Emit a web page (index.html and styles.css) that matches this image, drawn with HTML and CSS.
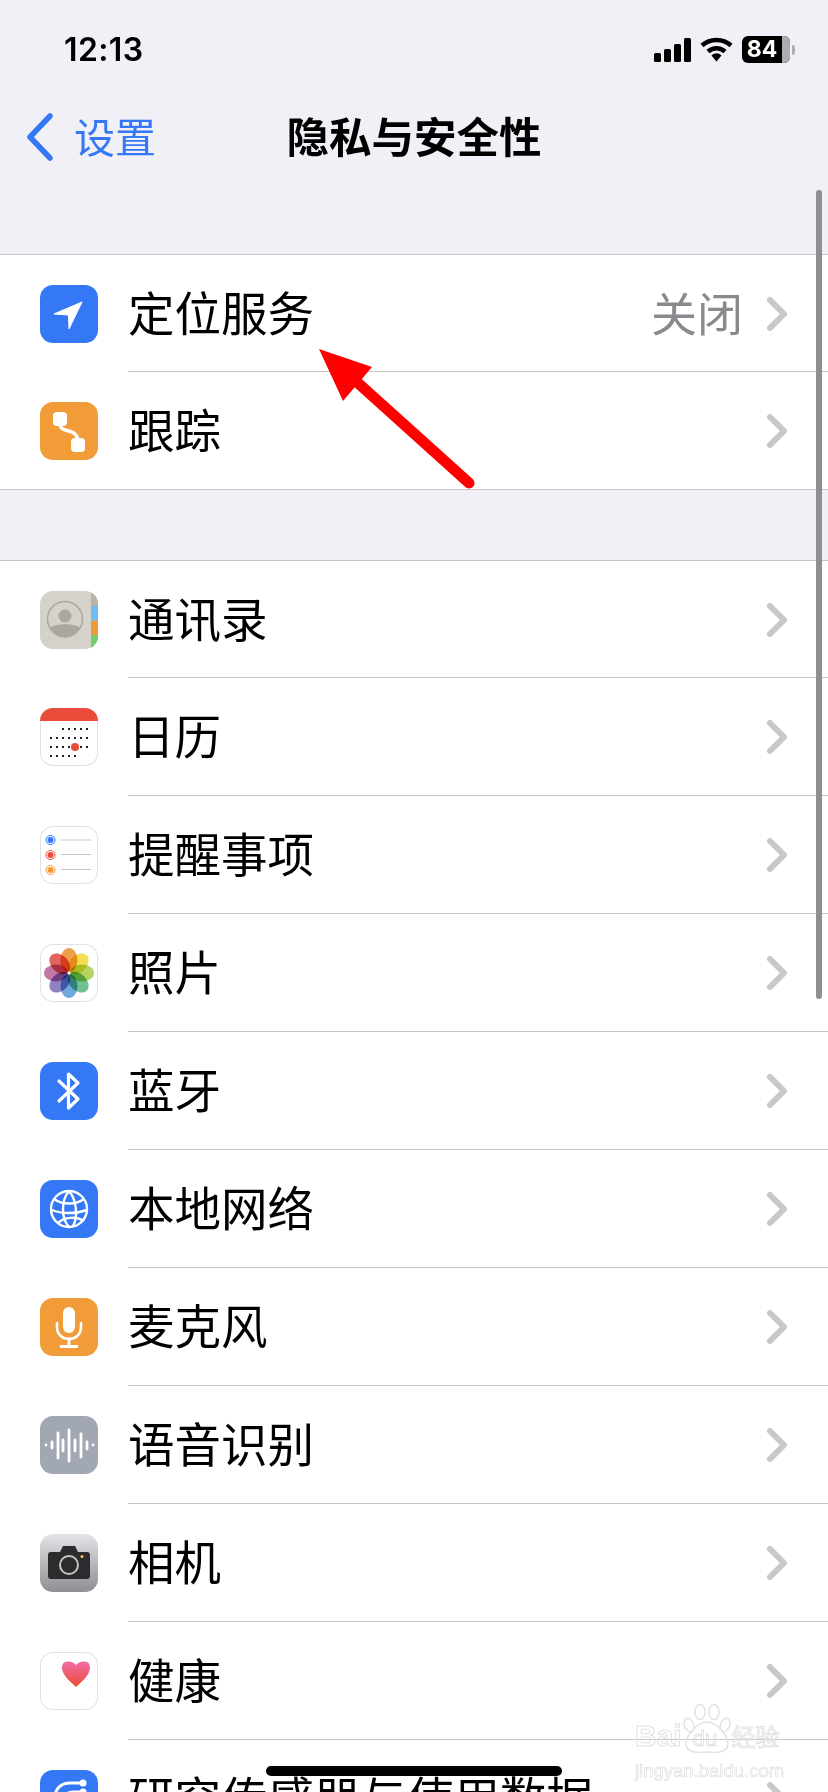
FILE: index.html
```html
<!DOCTYPE html>
<html lang="zh-CN">
<head>
    <meta charset="UTF-8">
    <meta name="viewport" content="width=device-width, initial-scale=1.0">
    <title>隐私与安全性</title>
    <link rel="stylesheet" href="styles.css">
</head>
<body>
<div class="screen">

    <div class="status-bar">
        <span class="time">12:13</span>
        <div class="status-icons">
            <svg class="signal" width="37" height="24" viewBox="0 0 37 24"><rect x="0" y="15" width="7" height="9" rx="1.5"/><rect x="10" y="11" width="7" height="13" rx="1.5"/><rect x="20" y="6" width="7" height="18" rx="1.5"/><rect x="30" y="0" width="7" height="24" rx="1.5"/></svg>
            <svg class="wifi" width="33" height="25" viewBox="0 0 33 25"><path d="M2 8.5 C10 1 23 1 31 8.500" fill="none" stroke="#000" stroke-width="4.500"/><path d="M8 14.500 C13 10 20 10 25 14.500" fill="none" stroke="#000" stroke-width="4.500"/><path d="M11.500 18.500 C14.500 15.500 18.500 15.500 21.500 18.500 L16.500 24.500 Z"/></svg>
            <div class="battery"><span class="battery-level">84</span><span class="battery-rest"></span></div>
            <span class="battery-cap"></span>
        </div>
    </div>

    <div class="nav-bar">
        <div class="back">
            <svg width="28" height="48" viewBox="0 0 28 48"><path d="M24 3 L4 24 L24 45" fill="none" stroke="#3478f6" stroke-width="5.500" stroke-linecap="round" stroke-linejoin="round"/></svg>
            <span class="back-label">设置</span>
        </div>
        <span class="nav-title">隐私与安全性</span>
    </div>

    <div class="group first">
        <div class="row">
            <div class="icon blue">
                <svg width="58" height="58" viewBox="0 0 58 58"><path d="M14 29 L42 17 L29 44 L28.500 30 Z" fill="#fff" stroke="#fff" stroke-width="1" stroke-linejoin="round"/></svg>
            </div>
            <div class="row-body"><span class="label">定位服务</span><span class="value">关闭</span><svg class="chev" width="20" height="34" viewBox="0 0 20 34"><path d="M3 3 L17 17 L3 31" /></svg></div>
        </div>
        <div class="row">
            <div class="icon orange">
                <svg width="58" height="58" viewBox="0 0 58 58"><path d="M20 22 C20 32 36 25 38 38" fill="none" stroke="#fff" stroke-width="3.500"/><rect x="13" y="10" width="14" height="14" rx="4" fill="#fff"/><rect x="31" y="36" width="14" height="14" rx="4" fill="#fff"/></svg>
            </div>
            <div class="row-body"><span class="label">跟踪</span><svg class="chev" width="20" height="34" viewBox="0 0 20 34"><path d="M3 3 L17 17 L3 31" /></svg></div>
        </div>
    </div>

    <div class="group">
        <div class="row">
            <div class="icon contacts">
                <svg width="58" height="58" viewBox="0 0 58 58"><rect x="51" y="0" width="7" height="58" fill="#b5b3aa"/><rect x="51" y="15" width="7" height="14" fill="#6fbdf2"/><rect x="51" y="30" width="7" height="14" fill="#f09a37"/><rect x="51" y="44" width="7" height="14" fill="#6fd06a"/><circle cx="25" cy="28" r="17.500" fill="none" stroke="#aba6a0" stroke-width="1.500"/><circle cx="25" cy="25" r="6.500" fill="#aba6a0"/><path d="M10 37 C14 32 36 32 40 37 A16.500 16.500 0 0 1 10 37 Z" fill="#aba6a0"/></svg>
            </div>
            <div class="row-body"><span class="label">通讯录</span><svg class="chev" width="20" height="34" viewBox="0 0 20 34"><path d="M3 3 L17 17 L3 31" /></svg></div>
        </div>
        <div class="row">
            <div class="icon outlined">
                <svg width="58" height="58" viewBox="0 0 58 58"><rect x="0" y="0" width="58" height="13" fill="#ea4c3c"/>
                    <g fill="#222"><rect x="22" y="20" width="2" height="2"/><rect x="28" y="20" width="2" height="2"/><rect x="34" y="20" width="2" height="2"/><rect x="40" y="20" width="2" height="2"/><rect x="46" y="20" width="2" height="2"/>
                    <rect x="10" y="29" width="2" height="2"/><rect x="16" y="29" width="2" height="2"/><rect x="22" y="29" width="2" height="2"/><rect x="28" y="29" width="2" height="2"/><rect x="34" y="29" width="2" height="2"/><rect x="40" y="29" width="2" height="2"/><rect x="46" y="29" width="2" height="2"/>
                    <rect x="10" y="38" width="2" height="2"/><rect x="16" y="38" width="2" height="2"/><rect x="22" y="38" width="2" height="2"/><rect x="28" y="38" width="2" height="2"/><rect x="40" y="38" width="2" height="2"/><rect x="46" y="38" width="2" height="2"/>
                    <rect x="10" y="47" width="2" height="2"/><rect x="16" y="47" width="2" height="2"/><rect x="22" y="47" width="2" height="2"/><rect x="28" y="47" width="2" height="2"/><rect x="34" y="47" width="2" height="2"/></g>
                    <circle cx="35" cy="39" r="4" fill="#ea4c3c"/></svg>
            </div>
            <div class="row-body"><span class="label">日历</span><svg class="chev" width="20" height="34" viewBox="0 0 20 34"><path d="M3 3 L17 17 L3 31" /></svg></div>
        </div>
        <div class="row">
            <div class="icon outlined">
                <svg width="58" height="58" viewBox="0 0 58 58"><circle cx="10.500" cy="14" r="4.500" fill="none" stroke="#3478f6"/><circle cx="10.500" cy="14" r="3" fill="#3478f6"/><circle cx="10.500" cy="29" r="4.500" fill="none" stroke="#ea4c3c"/><circle cx="10.500" cy="29" r="3" fill="#ea4c3c"/><circle cx="10.500" cy="44" r="4.500" fill="none" stroke="#f09a37"/><circle cx="10.500" cy="44" r="3" fill="#f09a37"/><path d="M21 14 H51 M21 28.500 H51 M21 43.500 H51" stroke="#c6c6c8" stroke-width="1"/></svg>
            </div>
            <div class="row-body"><span class="label">提醒事项</span><svg class="chev" width="20" height="34" viewBox="0 0 20 34"><path d="M3 3 L17 17 L3 31" /></svg></div>
        </div>
        <div class="row">
            <div class="icon outlined">
                <svg width="58" height="58" viewBox="0 0 58 58"><g class="flower">
                    <ellipse cx="29" cy="16" rx="8.500" ry="12" fill="#ef9f48"/>
                    <ellipse cx="29" cy="16" rx="8.500" ry="12" fill="#f2e050" transform="rotate(45 29 29)"/>
                    <ellipse cx="29" cy="16" rx="8.500" ry="12" fill="#b5d561" transform="rotate(90 29 29)"/>
                    <ellipse cx="29" cy="16" rx="8.500" ry="12" fill="#72bf8f" transform="rotate(135 29 29)"/>
                    <ellipse cx="29" cy="16" rx="8.500" ry="12" fill="#6fa8dd" transform="rotate(180 29 29)"/>
                    <ellipse cx="29" cy="16" rx="8.500" ry="12" fill="#8f83c2" transform="rotate(225 29 29)"/>
                    <ellipse cx="29" cy="16" rx="8.500" ry="12" fill="#c279a8" transform="rotate(270 29 29)"/>
                    <ellipse cx="29" cy="16" rx="8.500" ry="12" fill="#e2625e" transform="rotate(315 29 29)"/>
                    </g><circle cx="29" cy="29" r="1.500" fill="#fff"/></svg>
            </div>
            <div class="row-body"><span class="label">照片</span><svg class="chev" width="20" height="34" viewBox="0 0 20 34"><path d="M3 3 L17 17 L3 31" /></svg></div>
        </div>
        <div class="row">
            <div class="icon blue">
                <svg width="58" height="58" viewBox="0 0 58 58"><path d="M19 19 L38 37 L28.500 46 V12 L38 21 L19 39" fill="none" stroke="#fff" stroke-width="3.200" stroke-linecap="round" stroke-linejoin="round"/></svg>
            </div>
            <div class="row-body"><span class="label">蓝牙</span><svg class="chev" width="20" height="34" viewBox="0 0 20 34"><path d="M3 3 L17 17 L3 31" /></svg></div>
        </div>
        <div class="row">
            <div class="icon blue">
                <svg width="58" height="58" viewBox="0 0 58 58"><g fill="none" stroke="#fff" stroke-width="2.400"><circle cx="29" cy="29" r="18"/><path d="M29 11 C21 20 21 38 29 47 M29 11 C37 20 38 38 33 46"/><path d="M14 19 C22 25 36 25 44 19 M11.500 30 C22 34 36 34 47 30 M18 43 C24 37 36 36 44 41"/></g></svg>
            </div>
            <div class="row-body"><span class="label">本地网络</span><svg class="chev" width="20" height="34" viewBox="0 0 20 34"><path d="M3 3 L17 17 L3 31" /></svg></div>
        </div>
        <div class="row">
            <div class="icon orange">
                <svg width="58" height="58" viewBox="0 0 58 58"><rect x="23" y="9" width="12" height="26" rx="6" fill="#fff"/><path d="M17 25 V29 C17 45 41 45 41 29 V25" fill="none" stroke="#fff" stroke-width="2.600" stroke-linecap="round"/><path d="M29 41 V48 M21 48.500 H37" stroke="#fff" stroke-width="2.800" stroke-linecap="round"/></svg>
            </div>
            <div class="row-body"><span class="label">麦克风</span><svg class="chev" width="20" height="34" viewBox="0 0 20 34"><path d="M3 3 L17 17 L3 31" /></svg></div>
        </div>
        <div class="row">
            <div class="icon gray">
                <svg width="58" height="58" viewBox="0 0 58 58"><path d="M6 29 V29.100 M12 26 V32 M18 17 V42 M23 24 V35 M29 14 V45 M35 24 V35 M41 18 V41 M47 26 V33 M53 29 V29.100" stroke="#fff" stroke-width="2.800" stroke-linecap="round"/></svg>
            </div>
            <div class="row-body"><span class="label">语音识别</span><svg class="chev" width="20" height="34" viewBox="0 0 20 34"><path d="M3 3 L17 17 L3 31" /></svg></div>
        </div>
        <div class="row">
            <div class="icon camera">
                <svg width="58" height="58" viewBox="0 0 58 58"><path d="M11 18 H20 L23 12 H35 L38 18 H47 A3 3 0 0 1 50 21 V42 A3 3 0 0 1 47 45 H11 A3 3 0 0 1 8 42 V21 A3 3 0 0 1 11 18 Z" fill="#2c2c2e"/><circle cx="29" cy="31" r="9" fill="none" stroke="#c4c4c6" stroke-width="2"/><circle cx="42" cy="22.500" r="1.500" fill="#f5c542"/></svg>
            </div>
            <div class="row-body"><span class="label">相机</span><svg class="chev" width="20" height="34" viewBox="0 0 20 34"><path d="M3 3 L17 17 L3 31" /></svg></div>
        </div>
        <div class="row">
            <div class="icon outlined">
                <svg width="58" height="58" viewBox="0 0 58 58"><defs><linearGradient id="heart" x1="0" y1="0" x2="0" y2="1"><stop offset="0" stop-color="#f26ea8"/><stop offset="1" stop-color="#ee4a34"/></linearGradient></defs><path d="M36 35 C27 27 22 21.500 22 15.500 C22 11 25 9.500 28 9.500 C31 9.500 35 11 36 13.500 C37 11 41 9.500 44 9.500 C47 9.500 50 11 50 15.500 C50 21.500 45 27 36 35 Z" fill="url(#heart)"/></svg>
            </div>
            <div class="row-body"><span class="label">健康</span><svg class="chev" width="20" height="34" viewBox="0 0 20 34"><path d="M3 3 L17 17 L3 31" /></svg></div>
        </div>
        <div class="row">
            <div class="icon blue">
                <svg width="58" height="58" viewBox="0 0 58 58"><path d="M15 35 V27 C15 18 22 13 30 13 H42" fill="none" stroke="#fff" stroke-width="3"/><path d="M24 30 C24 24 28 22 34 22 H42" fill="none" stroke="#fff" stroke-width="3"/><circle cx="43" cy="13" r="3.500" fill="#fff"/><circle cx="43" cy="22" r="3.500" fill="#fff"/></svg>
            </div>
            <div class="row-body"><span class="label">研究传感器与使用数据</span><svg class="chev" width="20" height="34" viewBox="0 0 20 34"><path d="M3 3 L17 17 L3 31" /></svg></div>
        </div>
    </div>

    <div class="scrollbar"></div>

    <!-- red annotation arrow on top of the screenshot -->
    <svg class="arrow" width="170" height="150" viewBox="0 0 170 150"><path d="M43 38 L154 138" stroke="#ff0000" stroke-width="11" stroke-linecap="round"/><path d="M4 4 L57 22 L28 56 Z" fill="#ff0000"/></svg>

    <div class="watermark">
        <svg class="paw" width="48" height="52" viewBox="0 0 48 52"><g fill="none" stroke="#e2e2e2" stroke-width="1.500"><ellipse cx="6" cy="22" rx="4.500" ry="7" transform="rotate(-20 6 22)"/><ellipse cx="17" cy="9" rx="5" ry="7.500"/><ellipse cx="31" cy="9" rx="5" ry="7.500"/><ellipse cx="42" cy="22" rx="4.500" ry="7" transform="rotate(20 42 22)"/><path d="M3 41 C3 32 15 19 24 19 C33 19 45 32 45 41 C45 50 33 50 24 49 C15 50 3 50 3 41 Z"/></g></svg>
        <div class="wm-brand"><span class="wm-bai">Bai</span><span class="wm-du">du</span><span class="wm-cn">经验</span></div>
        <div class="wm-url">jingyan.baidu.com</div>
    </div>

    <div class="home-indicator"></div>
</div>
</body>
</html>
```
FILE: styles.css
```css
* {
    box-sizing: border-box;
}

html, body {
    margin: 0;
    padding: 0;
}

.screen {
    position: relative;
    width: 828px;
    height: 1792px;
    overflow: hidden;
    background-color: #f1f0f6;
    font-family: "Noto Sans CJK SC", "Noto Sans", sans-serif;
    color: #000;
}

/* status bar */
.status-bar {
    height: 96px;
    padding: 29px 0 0 64px;
    display: flex;
    justify-content: space-between;
    align-items: flex-start;
}

.time {
    font-family: Inter, "Liberation Sans", sans-serif;
    font-size: 32px;
    font-weight: 600;
    line-height: 42px;
    letter-spacing: 0.4px;
}

.status-icons {
    display: flex;
    align-items: center;
    margin-top: 7px;
    margin-right: 33px;
}

.signal {
    margin-right: 9px;
}

.wifi {
    margin-right: 9px;
}

.battery {
    display: flex;
    width: 48px;
    height: 27px;
    border-radius: 6px;
    overflow: hidden;
    background-color: #000;
}

.battery-level {
    width: 40px;
    color: #fff;
    font-family: Inter, "Liberation Sans", sans-serif;
    font-size: 23px;
    font-weight: 700;
    line-height: 27px;
    text-align: center;
}

.battery-rest {
    flex: 1;
    background-color: #adadad;
}

.battery-cap {
    width: 3px;
    height: 10px;
    margin-left: 2px;
    border-radius: 0 3px 3px 0;
    background-color: #adadad;
}

/* nav bar */
.nav-bar {
    position: relative;
    height: 82px;
    display: flex;
    align-items: center;
    justify-content: center;
}

.back {
    position: absolute;
    left: 26px;
    top: 17px;
    display: flex;
    align-items: center;
    gap: 20px;
}

.back-label {
    color: #3478f6;
    font-size: 41px;
    line-height: 48px;
    margin-top: -4px;
}

.nav-title {
    font-size: 42.500px;
    font-weight: 700;
    line-height: 50px;
    margin-top: -5px;
}

/* settings groups */
.group {
    margin-top: 70px;
    background-color: #fff;
    border-top: 1px solid #c6c6c8;
    border-bottom: 1px solid #c6c6c8;
}

.group.first {
    margin-top: 76px;
}

.row {
    height: 118px;
    display: flex;
    align-items: center;
    padding-left: 40px;
}

.row:first-child,
.row:last-child {
    height: 117px;
}

.row-body {
    flex: 1;
    height: 100%;
    margin-left: 30px;
    padding-right: 41px;
    display: flex;
    align-items: center;
    border-bottom: 1px solid #c6c6c8;
}

.row:last-child .row-body {
    border-bottom: none;
}

.label {
    flex: 1;
    font-size: 46.500px;
    line-height: 60px;
    margin-top: -5px;
}

.value {
    color: #8a8a8e;
    font-size: 46px;
    line-height: 60px;
    margin-top: -5px;
    margin-right: 24px;
}

.chev {
    margin-top: 1px;
    fill: none;
    stroke: #c7c7cc;
    stroke-width: 6;
    stroke-linecap: round;
    stroke-linejoin: round;
}

.icon {
    flex: none;
    width: 58px;
    height: 58px;
    border-radius: 13px;
    overflow: hidden;
    position: relative;
}

.icon svg {
    display: block;
}

.icon.blue {
    background-color: #3478f6;
}

.icon.orange {
    background-color: #f19c38;
}

.icon.gray {
    background-color: #a2a8b3;
}

.icon.contacts {
    background-color: #d4d2ca;
}

.icon.camera {
    background: linear-gradient(#e3e3e8, #8e8e93);
}

.icon.outlined {
    background-color: #fff;
    box-shadow: inset 0 0 0 1px #e1e1e3;
}

.flower ellipse {
    mix-blend-mode: multiply;
}

/* overlays */
.scrollbar {
    position: absolute;
    left: 816px;
    top: 190px;
    width: 6px;
    height: 809px;
    border-radius: 3px;
    background-color: #8f8f92;
}

.arrow {
    position: absolute;
    left: 315px;
    top: 345px;
}

.home-indicator {
    position: absolute;
    left: 266px;
    top: 1766px;
    width: 296px;
    height: 10px;
    border-radius: 5px;
    background-color: #000;
}

.watermark {
    position: absolute;
    left: 635px;
    top: 1703px;
    width: 150px;
}

.paw {
    position: absolute;
    left: 48px;
    top: 0;
}

.wm-brand {
    display: flex;
    align-items: baseline;
    margin-top: 17px;
}

.wm-bai,
.wm-du,
.wm-cn {
    color: transparent;
    -webkit-text-stroke: 1px #e2e2e2;
}

.wm-bai {
    font-family: "Liberation Sans", sans-serif;
    font-size: 30px;
    font-weight: 700;
    line-height: 32px;
}

.wm-du {
    margin-left: 11px;
    font-family: "Liberation Sans", sans-serif;
    font-size: 22px;
    line-height: 32px;
}

.wm-cn {
    margin-left: 14px;
    font-size: 24px;
    line-height: 32px;
}

.wm-url {
    margin-top: 6px;
    font-family: "Liberation Sans", sans-serif;
    font-size: 18.500px;
    line-height: 20px;
    white-space: nowrap;
    color: transparent;
    -webkit-text-stroke: 0.700px #dedede;
}
```
